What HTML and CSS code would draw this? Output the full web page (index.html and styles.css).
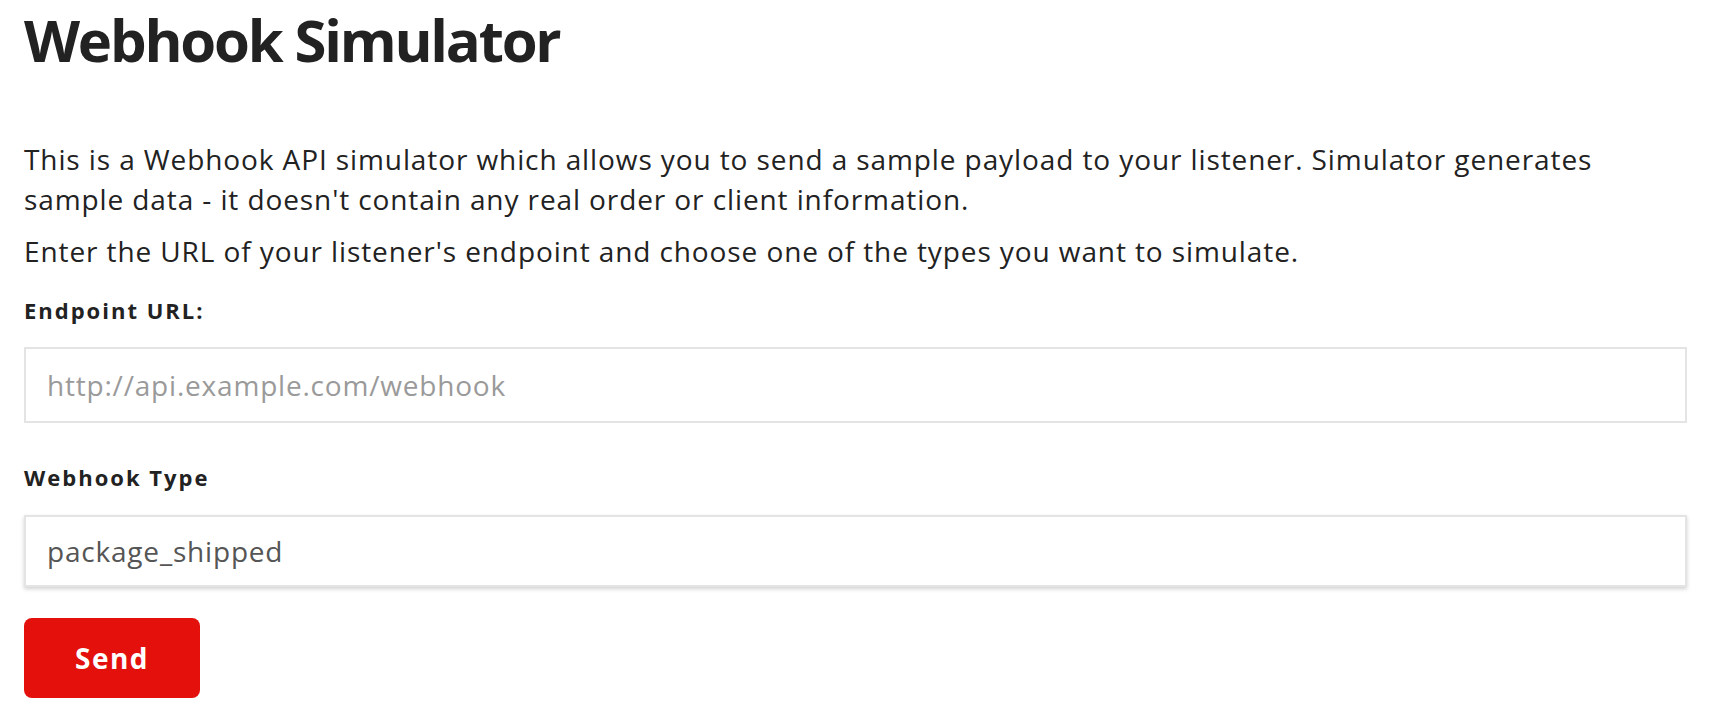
FILE: index.html
```
<!DOCTYPE html>
<html lang="en">
<head>
  <meta charset="UTF-8">
  <title>Webhook Simulator</title>
  <link rel="stylesheet" href="styles.css">
</head>
<body>

<div class="page">
  <h1>Webhook Simulator</h1>

  <p class="intro">This is a Webhook API simulator which allows you to send a sample payload to your listener. Simulator generates sample data - it doesn't contain any real order or client information.</p>
  <p class="intro second">Enter the URL of your listener's endpoint and choose one of the types you want to simulate.</p>

  <form class="sim-form" onsubmit="return false">
    <label class="field-label" for="endpoint">Endpoint URL:</label>
    <input type="text" id="endpoint" class="text-input" placeholder="http://api.example.com/webhook">

    <label class="field-label type-label" for="type">Webhook Type</label>
    <select id="type" class="select-input">
      <option value="package_shipped">package_shipped</option>
      <option value="order_created">order_created</option>
      <option value="order_cancelled">order_cancelled</option>
    </select>

    <button type="submit" class="send-button">Send</button>
  </form>
</div>

</body>
</html>
```

FILE: styles.css
```
body { margin: 0; background: #fff; color: #222; font-family: "Open Sans", "Liberation Sans", sans-serif; }
.page { padding: 0 25px 0 24px; }
h1 { font-size: 58px; line-height: normal; font-weight: 700; margin: 0; letter-spacing: -2.2px; }
.intro { font-size: 28px; line-height: 40px; margin: 60px 0 0; letter-spacing: 0.9px; }
.intro.second { margin-top: 12px; }
.sim-form { display: flex; flex-direction: column; align-items: flex-start; }
.field-label { font-size: 22px; line-height: 30px; font-weight: 700; margin-top: 24px; letter-spacing: 2px; }
.type-label { margin-top: 39px; }
.text-input, .select-input {
  width: 100%; box-sizing: border-box; margin-top: 22px;
  border: 2px solid #e4e4e4; background: #fff; border-radius: 0;
  font-family: inherit; font-size: 28px; letter-spacing: 0.8px; padding: 0 21px; outline: none;
}
.text-input { height: 76px; color: #555; }
.text-input::placeholder { color: #9a9a9a; }
.select-input {
  height: 72px; margin-top: 23px; color: #555;
  appearance: none; -webkit-appearance: none;
  box-shadow: 0 2px 4px rgba(0, 0, 0, 0.18);
}
.send-button {
  margin-top: 31px; width: 176px; height: 80px; border: none; border-radius: 8px;
  background: #e3100c; color: #fff; font-family: inherit; font-size: 28px; font-weight: 700;
  letter-spacing: 1.5px; cursor: pointer;
}
```
